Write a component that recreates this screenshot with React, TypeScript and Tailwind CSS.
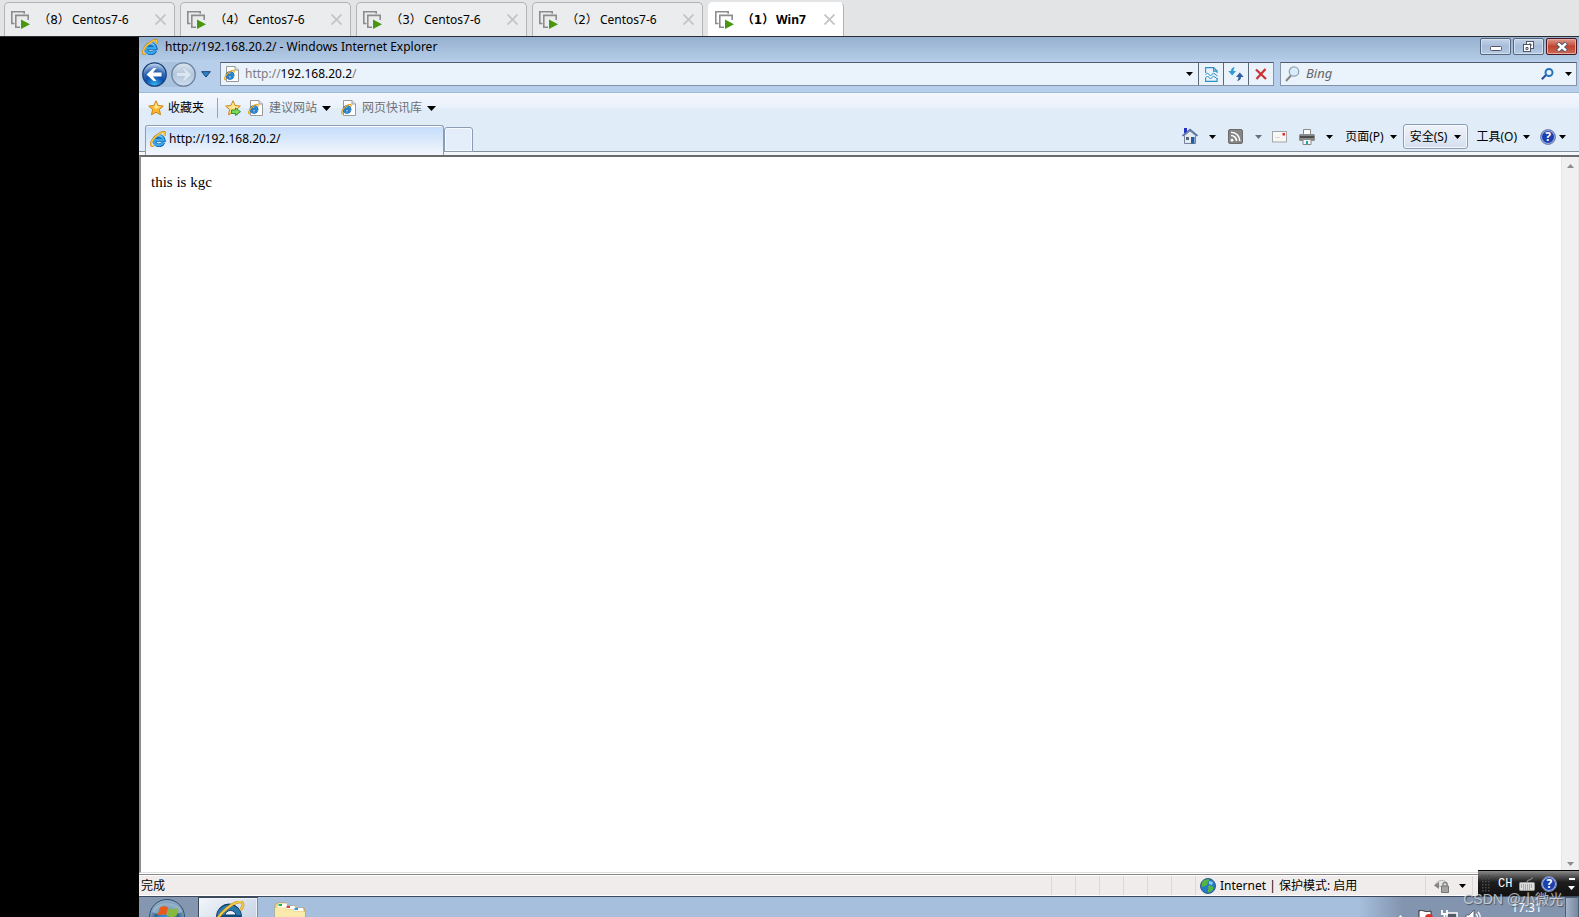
import type { ReactNode } from "react";

const UI = "font-['Noto_Sans','Noto_Sans_CJK_SC',sans-serif]";

const vmTabs = [
    { no: "（8）", name: "Centos7-6" },
    { no: "（4）", name: "Centos7-6" },
    { no: "（3）", name: "Centos7-6" },
    { no: "（2）", name: "Centos7-6" },
    { no: "（1）", name: "Win7", active: true },
];

export default function App() {
    return (<div className={`flex h-screen flex-col overflow-hidden bg-black text-[12px] text-black ${UI}`}>
      <VmTabBar />
      <div className="flex min-h-0 flex-1">
        <div className="w-[139px] shrink-0 bg-black"/>
        <div className="relative flex min-w-0 flex-1 flex-col bg-white">
          <TitleBar />
          <NavBar />
          <FavoritesBar />
          <CommandBar />
          <PageView />
          <StatusBar />
          <TaskBar />
          <LanguageBar />
          <div className="pointer-events-none absolute right-4 bottom-2 font-['Liberation_Sans','Noto_Sans_CJK_SC',sans-serif] text-[14px] leading-5 whitespace-nowrap text-[#dfe3e9]/75 [text-shadow:1px_1px_1px_rgba(60,60,60,0.7)]">CSDN @小微光</div>
        </div>
      </div>
    </div>);
}

function VmTabBar() {
    return (<div className="flex h-[37px] shrink-0 items-end gap-[5px] border-b border-[#2b2f33] bg-[#e3e4e6] pl-1">
      {vmTabs.map((tab) => (<div key={tab.no} className={`flex h-[34px] items-center rounded-t-[5px] border border-b-0 pl-1.5 ${tab.active ? "w-[136px] border-white border-r-[#b4b4b4] bg-white font-bold" : "w-[171px] border-[#b4b4b4] bg-[#ebecee]"}`}>
          <button className="flex min-w-0 flex-1 items-center text-left">
            <VmIcon />
            <span className="ml-1.5 w-9 shrink-0 text-center font-['DejaVu_Sans','Noto_Sans_CJK_SC',sans-serif] text-[12px] leading-5">{tab.no}</span>
            <span className="leading-5">{tab.name}</span>
          </button>
          <button aria-label="Close" className="mr-2 shrink-0">
            <svg width="11" height="11" viewBox="0 0 11 11" stroke="#c4c4c4" strokeWidth="1.8"><path d="M.5.5l10 10M10.5.5l-10 10"/></svg>
          </button>
        </div>))}
    </div>);
}

function VmIcon() {
    return (<svg width="19" height="18" viewBox="0 0 19 18" fill="none" className="shrink-0">
      <path d="M3.500 12.500H.8V.8h12.400v2" stroke="#8c8c8c" strokeWidth="1.600"/>
      <path d="M9 16.300H4.800V4.400h12.400V9" stroke="#8c8c8c" strokeWidth="1.600"/>
      <path d="M10 8.600l9 4.700-9 4.700z" fill="#46980f"/>
    </svg>);
}

function IeIcon() {
    return (<svg width="16" height="16" viewBox="0 0 16 16" fill="none" className="shrink-0">
      <path d="M13.400 11.400A4.800 4.600 0 1 1 13.700 9.200H5" stroke="#1262ad" strokeWidth="3.800"/>
      <path d="M13 11.400A4.900 4.600 0 1 1 13.400 9.200H5" stroke="#39a9ee" strokeWidth="2.400"/>
      <path d="M5.500 6.200C7.500 4 11 4.200 12.300 6.200" stroke="#9fdcfb" strokeWidth=".9"/>
      <path d="M3.400 14.800C-.2 16 .2 11.400 3.400 7.600 7.500 2.600 13.400-.2 14.800 1.400c.6.8.2 2-.5 3.200" stroke="#b97a10" strokeWidth="2"/>
      <path d="M3.400 14.600C0 15.600.6 11.400 3.600 7.700 7.500 2.900 13.200.2 14.600 1.500c.6.8.2 1.900-.5 3" stroke="#fcc63c" strokeWidth="1.500"/>
    </svg>);
}

function PageIcon() {
    return (<svg width="16" height="16" viewBox="0 0 16 16" fill="none" className="shrink-0">
      <path d="M2.500.5h8.500l3.500 3.500v11.500h-12z" fill="#fff" stroke="#9a9a9a"/>
      <path d="M11 .5V4h3.500" fill="#e6e6e6" stroke="#9a9a9a"/>
      <path d="M8.900 10.800A3.200 3.200 0 1 1 9.200 9.200H4" stroke="#1262ad" strokeWidth="2.400"/>
      <path d="M8.700 11A3.100 3.100 0 1 1 9 9.200H4" stroke="#2f95dd" strokeWidth="1.200"/>
      <path d="M2 13.500C-.4 14 .6 11 3 8.200 5.500 5.300 9 3.600 10 4.700c.4.500.1 1.200-.3 2" stroke="#e8a71c" strokeWidth="1.300"/>
    </svg>);
}

function Caret({ small, color = "#000" }: { small?: boolean; color?: string }) {
    return (<svg width={small ? 7 : 9} height={small ? 4 : 5} viewBox="0 0 9 5" className="shrink-0"><path d="M0 0h9L4.500 5z" fill={color}/></svg>);
}

function TitleBar() {
    const base = "flex h-[17px] w-[31px] items-center justify-center rounded-[2px] border";
    return (<div className="flex h-[23px] shrink-0 items-start bg-linear-to-b from-[#96b1d0] to-[#b3cbe6] pl-[3px]">
      <div className="flex flex-1 items-center gap-[7px] pt-px">
        <IeIcon />
        <span className="leading-[18px]">http://192.168.20.2/ - Windows Internet Explorer</span>
      </div>
      <div className="flex gap-[2px] pt-px pr-[2px]">
        <button aria-label="Minimize" className={`${base} border-[#54657c] bg-linear-to-b from-[#c4d4e8] via-[#a6bcd8] to-[#b3cae4] shadow-[inset_0_0_0_1px_#d3dfed]`}>
          <svg width="12" height="6" viewBox="0 0 12 6" className="mt-1"><rect x=".5" y=".5" width="11" height="4" rx="1" fill="#fff" stroke="#535666"/></svg>
        </button>
        <button aria-label="Restore" className={`${base} border-[#54657c] bg-linear-to-b from-[#c4d4e8] via-[#a6bcd8] to-[#b3cae4] shadow-[inset_0_0_0_1px_#d3dfed]`}>
          <svg width="13" height="12" viewBox="0 0 13 12" fill="#fff" stroke="#535666"><rect x="4.500" y=".5" width="7" height="7"/><path d="M7 3h2v2H7z"/><rect x="1.500" y="3.500" width="7" height="7"/><path d="M4 6.500h2v2H4z"/></svg>
        </button>
        <button aria-label="Close" className={`${base} border-[#4a1620] bg-linear-to-b from-[#dc9a8e] via-[#c0432f] to-[#cc6a55] shadow-[inset_0_0_0_1px_#e5aba2]`}>
          <svg width="12" height="10" viewBox="0 0 12 10"><path d="M1.500 1l9 8M10.500 1l-9 8" stroke="#535666" strokeWidth="4.400"/><path d="M2 1.500l8 7M10 1.500l-8 7" stroke="#fff" strokeWidth="2.400"/></svg>
        </button>
      </div>
    </div>);
}

function NavBar() {
    return (<div className="flex h-[33px] shrink-0 items-center border-b border-[#9db9d8] bg-[#b7cfea] pr-[2px] pb-1 pl-[3px]">
      <div className="flex shrink-0 items-center gap-1 rounded-full bg-[#a9c2de]">
        <button aria-label="Back">
          <svg width="25" height="25" viewBox="0 0 25 25">
            <defs><radialGradient id="back" cx=".5" cy=".95" r=".9"><stop offset="0" stopColor="#39b5f2"/><stop offset=".45" stopColor="#0d4fae"/><stop offset=".7" stopColor="#3a6cb4"/><stop offset="1" stopColor="#b9d3ef"/></radialGradient></defs>
            <circle cx="12.500" cy="12.500" r="11.700" fill="url(#back)" stroke="#1c3f78" strokeWidth="1.300"/>
            <path d="M4.500 12.500l7-6.500h3l-3.500 4.500h8.500v4H11l3.500 4.500h-3z" fill="#fff"/>
          </svg>
        </button>
        <button aria-label="Forward">
          <svg width="25" height="25" viewBox="0 0 25 25">
            <defs><linearGradient id="fwd" x1="0" y1="0" x2="0" y2="1"><stop offset="0" stopColor="#dbe6f1"/><stop offset=".5" stopColor="#b2c6dc"/><stop offset="1" stopColor="#cfdff0"/></linearGradient></defs>
            <circle cx="12.500" cy="12.500" r="11.700" fill="url(#fwd)" stroke="#6c809b" strokeWidth="1.300"/>
            <path d="M20.500 12.500l-7-6.500h-3l3.500 4.500H5.500v4H14L10.500 19h3z" fill="#dbe6f1" stroke="#b4c6da" strokeWidth=".7"/>
          </svg>
        </button>
      </div>
      <button aria-label="Recent pages" className="ml-[5px]">
        <svg width="10" height="7" viewBox="0 0 10 7"><path d="M.7.7h8.600L5 6z" fill="#2c86c8" stroke="#153f74"/></svg>
      </button>
      <div className="ml-[9px] flex h-6 min-w-0 flex-1 items-stretch border border-[#8393a8] border-t-[#4f5b6b] bg-[#eaf2fb]">
        <div className="flex min-w-0 flex-1 items-center gap-[5px] pl-[3px]">
          <PageIcon />
          <div className="min-w-0 flex-1 text-[#7d7d7d]">http://<span className="text-black">192.168.20.2</span>/</div>
        </div>
        <button aria-label="Address list" className="flex w-[18px] items-center justify-center"><Caret small/></button>
        <ToolCell label="Compatibility view">
          <svg width="13" height="15" viewBox="0 0 13 15" fill="none" stroke="#2a8fc4"><path d="M.6 6V.6h8l3.500 3.500V6M8.600.6v3.500h3.500M.6 11v3.400h11.500V11" strokeWidth="1.100"/><path d="M.5 7.500l2-1.500 3 3 3-3 4 3M.5 11l2-2 3 3 3-3 4 3"/></svg>
        </ToolCell>
        <ToolCell label="Refresh">
          <svg width="16" height="14" viewBox="0 0 16 14"><path d="M7 0C4 .5 3 2 3 4H.3L4.200 8.500 8 4H5.500c0-1.500.3-2.500 1.500-4z" fill="#2f9bd2"/><path d="M9 14c3-.5 4-2 4-4h2.700L11.800 5.500 8 10h2.500c0 1.500-.3 2.500-1.500 4z" fill="#30609f"/></svg>
        </ToolCell>
        <ToolCell label="Stop">
          <svg width="12" height="12" viewBox="0 0 12 12"><path d="M1 1.500l10 9.500M10.500 1L1.500 11" stroke="#cc3433" strokeWidth="2.300"/></svg>
        </ToolCell>
      </div>
      <form className="ml-[6px] flex h-6 w-[297px] shrink-0 items-center border border-[#8393a8] border-t-[#4f5b6b] bg-[#eaf2fb] pr-1 pl-1" onSubmit={(e) => e.preventDefault()}>
        <svg width="15" height="16" viewBox="0 0 15 16" fill="none"><path d="M6 9.500L1 15" stroke="#858585" strokeWidth="2"/><circle cx="9" cy="5.500" r="4.700" fill="#d9eefb" stroke="#93a3b2" strokeWidth="1.300"/></svg>
        <input aria-label="Search" placeholder="Bing" className="ml-[6px] min-w-0 flex-1 bg-transparent text-[13px] italic outline-none placeholder:text-[#666]"/>
        <button aria-label="Go">
          <svg width="13" height="12" viewBox="0 0 13 12" fill="none"><path d="M5 7L.8 11.300" stroke="#2a4c96" strokeWidth="2"/><circle cx="8" cy="4.500" r="3.500" stroke="#2473bd" strokeWidth="2"/></svg>
        </button>
        <button aria-label="Search options" className="ml-[11px]"><Caret small/></button>
      </form>
    </div>);
}

function ToolCell({ label, children }: { label: string; children: ReactNode }) {
    return <button aria-label={label} className="flex w-[25px] shrink-0 items-center justify-center border-l border-[#5c6979]">{children}</button>;
}

function Star({ add }: { add?: boolean }) {
    return (<svg width="16" height="16" viewBox="0 0 16 16" className="shrink-0">
      <path d="M8 .8l2.100 4.700 5.200.6-3.900 3.400 1.100 5.300L8 12.200l-4.500 2.600 1.100-5.300L.7 6.100l5.200-.6z" fill={add ? "#fbe08a" : "#fdb72d"} stroke="#c98516"/>
      <path d="M8 2.500l1.500 3.700 3.500.4-5 2.400-3.500-2.400 2-.4z" fill="#ffe893"/>
      {add && <path d="M6.500 10h4V8l5 3.700-5 3.800v-2h-4z" fill="#7fd75a" stroke="#278c24" strokeWidth=".9"/>}
    </svg>);
}

function FavoritesBar() {
    return (<div className="flex h-[30px] shrink-0 items-center bg-linear-to-b from-[#f3f7fe] from-0% via-[#eaf1fb] via-50% to-[#e0edf9] to-50% pl-[9px]">
      <button className="flex items-center gap-1"><Star />收藏夹</button>
      <div className="ml-[13px] h-5 w-px bg-[#9aa4b0]"/>
      <button aria-label="Add to favorites" className="ml-[7px]"><Star add/></button>
      <button className="ml-[7px] flex items-center gap-[5px] text-[#6f7276]"><PageIcon />建议网站<Caret /></button>
      <button className="ml-[10px] flex items-center gap-[5px] text-[#6f7276]"><PageIcon />网页快讯库<Caret /></button>
    </div>);
}

function CommandBar() {
    return (<div className="flex h-8 shrink-0 items-start bg-[linear-gradient(#e0edf9_28px,#858f9b_28px,#858f9b_29px,#f3f7fc_29px)] pt-[2px]">
      <div className="ml-[6px] flex h-[30px] w-[299px] shrink-0 items-center gap-[3px] rounded-t-[3px] border border-b-0 border-[#8d9db1] bg-linear-to-b from-[#c3dcfb] to-[#f3f7fc] pb-1 pl-1 shadow-[inset_0_1px_0_#fff]">
        <IeIcon />
        <span>http://192.168.20.2/</span>
      </div>
      <button aria-label="New tab" className="mt-0.5 h-[25px] w-[29px] shrink-0 rounded-t-[3px] border border-[#8d9db1] bg-[#e4eefa] shadow-[inset_0_0_0_1px_#f5f9fe]"/>
      <div className="flex h-[23px] flex-1 items-center justify-end pr-[13px]">
        <button aria-label="Home" className="flex items-center gap-[11px]">
          <svg width="16" height="17" viewBox="0 0 16 17"><path d="M2 0h3v5H2z" fill="#2730c8"/><path d="M2.500 7.500L8 3l5.500 4.500v8h-11z" fill="#e6ebf2" stroke="#77839a"/><path d="M.5 8L8 1.500 15.500 8" fill="none" stroke="#5470a6" strokeWidth="1.600"/><path d="M4 9h3v3H4z" fill="#5a6472"/><path d="M9 9h3.500v6.500H9z" fill="#1f5da5"/></svg>
          <Caret small/>
        </button>
        <button aria-label="Feeds" className="ml-3 flex items-center gap-[12px]">
          <svg width="15" height="15" viewBox="0 0 15 15" fill="none"><rect x=".5" y=".5" width="14" height="14" rx="1.500" fill="#858585" stroke="#6d6d6d"/><circle cx="4" cy="11.200" r="1.400" fill="#fff"/><path d="M3 6.500a5.500 5.500 0 0 1 5.500 5.500M3 3.200a8.800 8.800 0 0 1 8.800 8.800" stroke="#fff" strokeWidth="1.600"/></svg>
          <Caret small color="#6b7077"/>
        </button>
        <button aria-label="Read mail" className="ml-[10px]">
          <svg width="15" height="12" viewBox="0 0 15 12" fill="none"><rect x=".5" y=".5" width="14" height="10.500" fill="#f7f7f5" stroke="#a5a5a5"/><path d="M10.500 2h2.500v2.500h-2.500z" fill="#d82c2c"/><path d="M3 6.500h5" stroke="#d8d8d8"/></svg>
        </button>
        <button aria-label="Print" className="ml-[12px] flex items-center gap-[11px]">
          <svg width="16" height="16" viewBox="0 0 16 16"><path d="M4.500.5h7V6h-7z" fill="#fff" stroke="#898989"/><rect y="5" width="16" height="7" rx="1.500" fill="#8a8a8a"/><path d="M1 7h14v2H1z" fill="#4c4c4c"/><path d="M4 10.500h8v5H4z" fill="#f5f5f5" stroke="#888"/><path d="M7 12h2v3H7z" fill="#2c9cb1"/></svg>
          <Caret small/>
        </button>
        <button className="ml-[12px] flex items-center gap-[6px]">页面(P)<Caret small/></button>
        <button className="ml-[6px] flex h-[25px] items-center gap-[7px] rounded-[3px] border border-[#8c9db5] bg-linear-to-b from-[#eff3fa] to-[#d5dfee] px-[6px] shadow-[inset_0_0_0_1px_#f5f8fc]">安全(S)<Caret small/></button>
        <button className="ml-[8px] flex items-center gap-[6px]">工具(O)<Caret small/></button>
        <button aria-label="Help" className="ml-[10px] flex items-center gap-[3px]"><HelpIcon /><Caret small/></button>
      </div>
    </div>);
}

function HelpIcon() {
    return (<span className="flex size-4 items-center justify-center rounded-full border border-[#7f8db5] bg-[#1c3fae] text-[12px] leading-none font-bold text-white shadow-[inset_0_0_0_1px_#9fb3e0]">?</span>);
}

function PageView() {
    return (<div className="mb-px flex min-h-0 flex-1 border-t-2 border-b border-l-2 border-t-[#6b6b6b] border-b-[#dedede] border-l-[#8d8d8d] bg-white">
      <main className="flex-1 pt-[15px] pl-[10px] font-['Liberation_Serif',serif] text-[15px] leading-5">this is kgc</main>
      <div className="flex w-[18px] shrink-0 flex-col items-center justify-between border-x border-[#e6e6e6] bg-[#f0f0f0] pt-[7px] pb-1.5">
        <svg width="7" height="4" viewBox="0 0 7 4"><path d="M0 4h7L3.500 0z" fill="#8c8c8c"/></svg>
        <Caret small color="#8c8c8c"/>
      </div>
    </div>);
}

function StatusBar() {
    return (<div className="flex h-[23px] shrink-0 border-t border-b border-t-[#8b8789] border-b-[#3d4a5c] bg-[#f0eceb] shadow-[inset_0_1px_0_#fff,inset_0_-1px_0_#fff]">
      <div className="flex flex-1 items-center pl-0.5">完成</div>
      {[0, 1, 2, 3, 4, 5].map((i) => <div key={i} className="my-px w-6 border-l border-[#dcd8d7]"/>)}
      <div className="my-px flex w-[230px] items-center gap-1 border-l border-[#dcd8d7] pl-1">
        <svg width="16" height="16" viewBox="0 0 16 16"><circle cx="8" cy="8" r="7.500" fill="#2478cc" stroke="#315b84"/><path d="M2 4.500C4 1 8 .8 9 1.500 10 3 7 4 7.500 6 6 9 3 8 1.500 9zM8 8c3-1 5 0 5.500 2-1 3-3 4-5 4.500C7 12 9 11 8 8z" fill="#55b63c"/><path d="M9 3l4 1-1 3-3-1z" fill="#8cc8f2"/></svg>
        <span>Internet | 保护模式: 启用</span>
      </div>
      <button aria-label="Privacy" className="my-px flex w-[47px] items-center gap-[9px] border-l border-[#dcd8d7] pl-2">
        <svg width="16" height="14" viewBox="0 0 16 14"><path d="M1 6c3-6 10-6 13-1L9 8z" fill="#e4e4e4" stroke="#b4b4b4"/><path d="M0 6.500l5-3.500v7z" fill="#858585"/><path d="M9 7V5.500a2 2 0 0 1 4 0V7" fill="none" stroke="#858585" strokeWidth="1.400"/><path d="M7.500 7h7v6.500h-7z" fill="#a3a3a3" stroke="#777"/></svg>
        <Caret small/>
      </button>
      <div className="my-px w-[107px] border-l border-[#dcd8d7]"/>
    </div>);
}

function TaskBar() {
    return (<div className="flex h-5 shrink-0 items-start overflow-hidden bg-[#a6bfdd]">
      <button aria-label="Start" className="flex h-10 w-[59px] shrink-0 justify-center bg-[#8496b0] pt-px">
        <svg width="38" height="38" viewBox="0 0 38 38" className="mr-1">
          <defs><radialGradient id="orb" cx=".5" cy=".6" r=".55"><stop offset="0" stopColor="#3abdf0"/><stop offset=".6" stopColor="#27608f"/><stop offset="1" stopColor="#8fabc4"/></radialGradient></defs>
          <circle cx="19" cy="19" r="17.500" fill="url(#orb)" stroke="#2b4c70"/>
          <path d="M4 14C8 2 30 2 34 14c-8 4-22 4-30 0z" fill="#b9cddd" opacity=".55"/>
          <path d="M12 9.500c3-2 6-1.500 8 0l-2 8c-3-1.500-5-1.500-8.500 0z" fill="#e85a1c"/>
          <path d="M21 10c3 1.500 6 1.500 9.500 0l-2 8c-3 1.500-6 1.500-9.500 0z" fill="#86b93c"/>
          <path d="M9 18.500c3-1.500 6-1.500 8.500 0l-2 8c-3-1.500-6-1.500-8.500 0z" fill="#2b8de0"/>
          <path d="M18.500 19c3 1.500 6 1.500 9.500 0l-2 8c-3 1.500-6 1.500-9.500 0z" fill="#f4c22b"/>
        </svg>
      </button>
      <button aria-label="Internet Explorer" className="flex h-10 w-[60px] shrink-0 justify-center border border-[#3c4757] border-r-[#7c8da5] bg-linear-to-br from-[#f3f6fa] to-[#b8c9de] pt-[3px] pl-0.5 shadow-[inset_0_0_0_1px_#eef3f9]">
        <svg width="32" height="32" viewBox="0 0 32 32" fill="none">
          <circle cx="16" cy="15.500" r="12.500" fill="#0f4c80" stroke="#123a5e"/>
          <path d="M4 14C6 1 26 1 28 14z" fill="#2c78ac"/>
          <path d="M12 14c1-6 10-6 11 0z" fill="#eaf2f8" stroke="#12406a"/>
          <path d="M10 19h20" stroke="#c6dced" strokeWidth="4"/>
          <path d="M2 24C4 13 22-1 28.500 1.200c3 1.500 1 5-1 8" stroke="#c08f1c" strokeWidth="2.800"/>
          <path d="M2 24C4 13 22-1 28.500 1.200c3 1.500 1 5-1 8" stroke="#f4cb45" strokeWidth="1.800"/>
        </svg>
      </button>
      <button aria-label="Explorer" className="ml-4 flex h-10 w-8 shrink-0 justify-center pt-[5px]">
        <svg width="32" height="28" viewBox="0 0 32 28">
          <path d="M1 3.500L3 1h9l2 3h7l2 2h7l1 3v19H1z" fill="#f3dc8b" stroke="#b89b48" strokeWidth=".8"/>
          <path d="M4 1.500h9v4H4zM12 4h9v3h-9zM20 6h9v3h-9z" fill="#fff"/>
          <path d="M4.500 2H8v2H4.500z" fill="#1fb33a"/><path d="M12.500 4H16v2h-3.500z" fill="#d54a3a"/><path d="M20.500 6H24v2h-3.500z" fill="#2f94de"/>
          <path d="M1 6h9l2 2h7l2 2h10v18H1z" fill="#f9eaab"/>
        </svg>
      </button>
      <div className="flex-1"/>
      <div className="flex h-10 w-[220px] shrink-0 items-start bg-linear-to-r from-[#a6bfdd] via-[#8394ae] via-20% to-[#8394ae]">
        <button aria-label="Show hidden icons" className="mt-[18px] ml-[38px]"><svg width="7" height="4" viewBox="0 0 7 4"><path d="M0 4h7L3.500 0z" fill="#fff"/></svg></button>
        <svg width="17" height="17" viewBox="0 0 17 17" className="mt-[12px] ml-[13px] shrink-0"><path d="M2 1v16M2 2c4-2 5 2 12 0v9H2" fill="#fff" stroke="#333"/><circle cx="12" cy="9" r="4" fill="#d6302d"/></svg>
        <svg width="17" height="17" viewBox="0 0 17 17" fill="none" className="mt-[12px] ml-[7px] shrink-0"><path d="M6 4h10v9H6z" fill="#4f5864" stroke="#fff" strokeWidth="1.500"/><path d="M1 1v4h5V1M3.500 5v9" stroke="#fff" strokeWidth="1.800"/></svg>
        <svg width="17" height="17" viewBox="0 0 17 17" fill="none" className="mt-[12px] ml-[7px] shrink-0"><path d="M1 6h3l5-5v15l-5-4H1z" fill="#fff" stroke="#444" strokeWidth=".7"/><path d="M11 5c2 2 2 5 0 7M13 3c3 3 3 8 0 11" stroke="#fff" strokeWidth="1.300"/></svg>
        <span className="mt-[3px] flex-1 pl-1.5 text-center leading-4 text-white">17:31</span>
        <button aria-label="Show desktop" className="h-10 w-[14px] border border-[#4f5d70] bg-linear-to-r from-[#a3b3c8] to-[#76879f]"/>
      </div>
    </div>);
}

function LanguageBar() {
    return (<div className="absolute right-0 bottom-[21px] flex h-[26px] w-[101px] items-center border-t border-black bg-linear-to-b from-[#8a8a8a] via-[#1d1d1d] via-45% to-[#111] pr-1 pl-1 text-white">
      <svg width="8" height="17" viewBox="0 0 8 17" fill="#4b4b4b">
        {[0, 3, 6].map((x) => [0, 3, 6, 9, 12, 15].map((y) => <path key={`${x}-${y}`} d={`M${x} ${y}h1.500v1.500h-1.500z`}/>))}
      </svg>
      <button className="ml-2 font-['Liberation_Mono',monospace] text-[12px] leading-4">CH</button>
      <button aria-label="Keyboard" className="ml-[7px]">
        <svg width="16" height="14" viewBox="0 0 16 14" fill="none"><path d="M8 5C8 2 13 4 13 .5" stroke="#b5b5b5"/><rect x=".5" y="5.500" width="15" height="8" rx="1" fill="#ddd" stroke="#999"/><path d="M2 8h12M2 10h12M4 12h8" stroke="#777" strokeDasharray="1 1"/></svg>
      </button>
      <button aria-label="Help" className="ml-[6px]"><HelpIcon /></button>
      <div className="ml-auto flex flex-col items-center gap-1.5">
        <div className="h-0.5 w-1.5 bg-white"/>
        <Caret small color="#fff"/>
      </div>
    </div>);
}
